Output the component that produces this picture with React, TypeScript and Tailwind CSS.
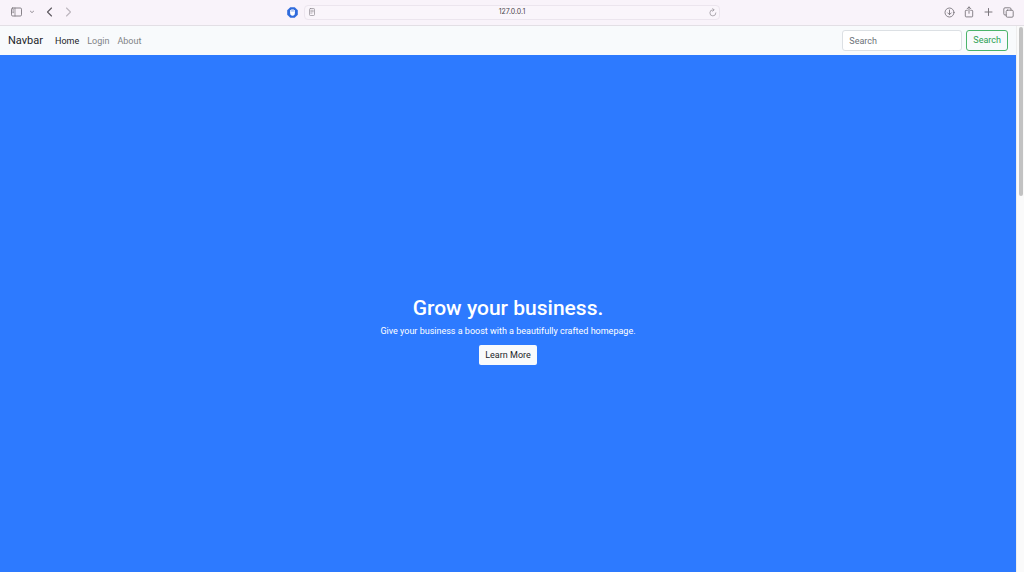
import React from 'react';

interface NavItem {
  label: string;
  active?: boolean;
}

const navItems: NavItem[] = [
  { label: 'Home', active: true },
  { label: 'Login' },
  { label: 'About' }
];

const iconProps = {
  fill: 'none',
  stroke: 'currentColor',
  strokeLinecap: 'round' as const,
  strokeLinejoin: 'round' as const,
  'aria-hidden': true
};

function BrowserToolbar() {
  return (
    <header className="grid h-[26px] shrink-0 grid-cols-[1fr_minmax(0,416px)_1fr] items-center border-b border-[#e3dfe5] bg-[#f9f3fa] pb-px font-['Inter','Liberation_Sans',sans-serif] text-[#7b767d]">
      <div className="flex items-center pl-[11px] pr-[6px]">
        <button aria-label="Sidebar">
          <svg {...iconProps} className="block" width="11" height="10" viewBox="0 0 11 10">
            <rect x="0.5" y="1" width="10" height="8" rx="1.2" strokeWidth="0.9" />
            <path d="M4 1v8M1.7 2.8h1M1.7 4.2h1M1.7 5.6h1" strokeWidth="0.7" />
          </svg>
        </button>
        <button aria-label="Tab groups" className="ml-2">
          <svg {...iconProps} className="block" width="4" height="4" viewBox="0 0 4 4">
            <path d="M0.4 1.2L2 2.6l1.6-1.4" strokeWidth="0.8" />
          </svg>
        </button>
        <button aria-label="Back" className="ml-3 text-[#5d585f]">
          <svg {...iconProps} className="block" width="7" height="10" viewBox="0 0 7 10">
            <path d="M5.5 1L1.5 5l4 4" strokeWidth="1.1" />
          </svg>
        </button>
        <button aria-label="Forward" className="ml-3 text-[#bdb7bf]">
          <svg {...iconProps} className="block" width="7" height="10" viewBox="0 0 7 10">
            <path d="M1.5 1l4 4-4 4" strokeWidth="1.1" />
          </svg>
        </button>
        <button aria-label="Content blocker" className="ml-auto">
          <svg className="block" width="11" height="11" viewBox="0 0 11 11" aria-hidden="true">
            <path d="M3.3 0.2h4.4l3.1 3.1v4.4l-3.1 3.1H3.3L0.2 7.7V3.3z" fill="#2f6bdc" />
            <path
              d="M3.7 5.5V3.4M4.9 5V2.6M6.1 5V2.6M7.3 5.5V3.4"
              stroke="#fff"
              strokeWidth="1"
              strokeLinecap="round"
            />
            <path d="M3.2 4.8h4.6v1.8c0 1.3-.8 2.1-2.3 2.1S3.2 7.9 3.2 6.6z" fill="#fff" />
          </svg>
        </button>
      </div>

      <div className="flex h-[15px] items-center rounded border border-[#ece5ee] bg-[#faf5fb] pl-1 pr-[2px] text-[#8e8990]">
        <svg {...iconProps} width="6" height="8" viewBox="0 0 6 8">
          <rect x="0.5" y="0.5" width="5" height="7" rx="0.9" strokeWidth="0.7" />
          <path d="M1.7 2.3h2.6M1.7 3.7h2.6M1.7 5.1h1.3" strokeWidth="0.6" />
        </svg>
        <input
          aria-label="Address"
          defaultValue="127.0.0.1"
          className="min-w-0 flex-1 bg-transparent text-center text-[7px] leading-3 text-[#4a464c] outline-none"
        />
        <button aria-label="Reload">
          <svg {...iconProps} className="block" width="8" height="9" viewBox="0 0 8 9">
            <path d="M6.9 4.9A3 3 0 1 1 4 1.9h.8M3.7 0.5l1.4 1.4-1.4 1.4" strokeWidth="0.7" />
          </svg>
        </button>
      </div>

      <div className="flex items-center justify-end gap-[9px] pr-[10px]">
        <button aria-label="Downloads">
          <svg {...iconProps} className="block" width="11" height="11" viewBox="0 0 11 11">
            <circle cx="5.5" cy="5.5" r="4.5" strokeWidth="0.9" />
            <path d="M5.5 3v4.6M3.7 5.9l1.8 1.8 1.8-1.8" strokeWidth="0.9" />
          </svg>
        </button>
        <button aria-label="Share">
          <svg {...iconProps} className="block" width="10" height="12" viewBox="0 0 10 12">
            <path
              d="M3.3 4.3H2.1a.8.8 0 0 0-.8.8v5a.8.8 0 0 0 .8.8h5.8a.8.8 0 0 0 .8-.8v-5a.8.8 0 0 0-.8-.8H6.7M5 7.3V1M3.2 2.7L5 0.9l1.8 1.8"
              strokeWidth="0.9"
            />
          </svg>
        </button>
        <button aria-label="New tab">
          <svg {...iconProps} className="block" width="11" height="10" viewBox="0 0 11 10">
            <path d="M5.5 1.5v7M2 5h7" strokeWidth="1" />
          </svg>
        </button>
        <button aria-label="Tab overview">
          <svg {...iconProps} className="block" width="11" height="11" viewBox="0 0 11 11">
            <rect x="3.2" y="3.2" width="7" height="7" rx="1.2" strokeWidth="0.9" />
            <path
              d="M3.2 8H2a1.2 1.2 0 0 1-1.2-1.2V2A1.2 1.2 0 0 1 2 0.8h4.8A1.2 1.2 0 0 1 8 2v1.2"
              strokeWidth="0.9"
            />
          </svg>
        </button>
      </div>
    </header>
  );
}

function Navbar() {
  return (
    <nav className="flex items-center bg-[#f8fafc] px-2 py-1">
      <a href="#" className="mr-3 text-[11px] leading-5 text-[#212529]">
        Navbar
      </a>
      <ul className="flex gap-2">
        {navItems.map((item) => (
          <li key={item.label}>
            <a
              href="#"
              className={`block text-[9px] leading-4 ${item.active ? 'text-[#1b1d1f]' : 'text-[#808386]'}`}
            >
              {item.label}
            </a>
          </li>
        ))}
      </ul>
      <form className="ml-auto flex gap-1" onSubmit={(e) => e.preventDefault()}>
        <input
          type="search"
          placeholder="Search"
          aria-label="Search"
          className="h-[21px] w-[120px] rounded-[3px] border border-[#dce0e4] bg-white px-[6px] text-[9px] text-[#212529] placeholder:text-[#6c7278]"
        />
        <button
          type="submit"
          className="h-[21px] rounded-[3px] border border-[#4bb46b] px-[6px] text-[9px] text-[#2ba052]"
        >
          Search
        </button>
      </form>
    </nav>
  );
}

function Hero() {
  return (
    <main className="flex min-h-full shrink-0 flex-col items-center justify-center bg-[#2d7aff] pt-1 text-center text-white">
      <h1 className="mb-1 text-[21px] font-medium leading-[26px]">Grow your business.</h1>
      <p className="mb-2 text-[9px] leading-3">
        Give your business a boost with a beautifully crafted homepage.
      </p>
      <a
        href="#"
        className="rounded-[2px] bg-[#f8fafc] px-[6px] py-[3px] text-[9px] leading-[14px] text-[#212529]"
      >
        Learn More
      </a>
    </main>
  );
}

export default function App() {
  return (
    <div className="flex h-screen flex-col overflow-hidden font-['Roboto','Liberation_Sans',sans-serif]">
      <BrowserToolbar />
      <div className="flex min-h-0 flex-1">
        <div className="flex min-w-0 flex-1 flex-col overflow-hidden">
          <Navbar />
          <Hero />
        </div>
        <div className="flex w-2 shrink-0 flex-col items-center border-l border-[#eeeeee] bg-[#fafafa] py-px">
          <div className="h-[31%] w-1 rounded-full bg-[#c2c2c2]" />
        </div>
      </div>
    </div>
  );
}
